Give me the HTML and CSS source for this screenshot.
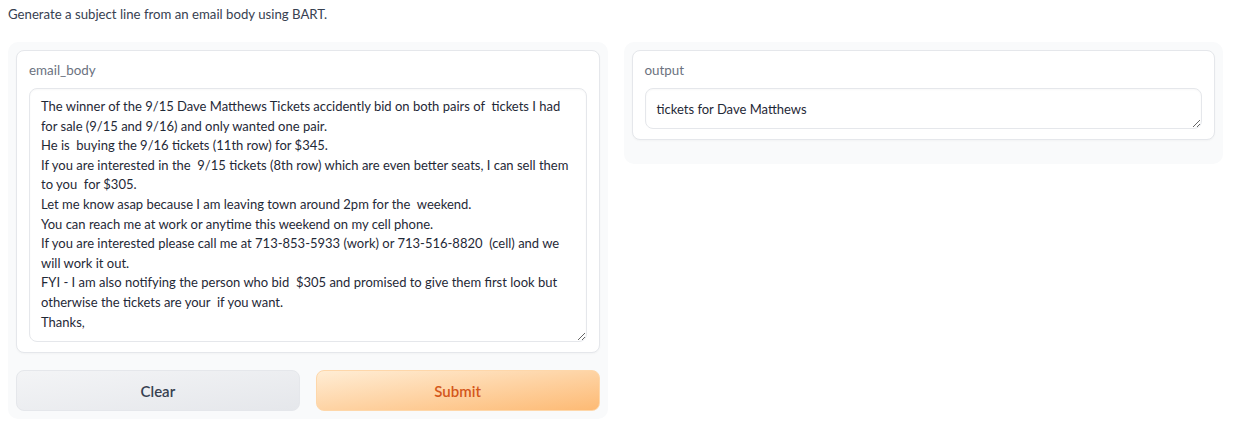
FILE: index.html
```html
<!DOCTYPE html>
<html>
<head>
<meta charset="utf-8">
<link rel="stylesheet" href="styles.css">
</head>
<body>
<p class="desc">Generate a subject line from an email body using BART.</p>
<div class="row">
  <div class="col">
    <div class="panel">
      <label class="block">
        <span class="label">email_body</span>
        <textarea class="ta ta-in" wrap="off">The winner of the 9/15 Dave Matthews Tickets accidently bid on both pairs of  tickets I had
for sale (9/15 and 9/16) and only wanted one pair.
He is  buying the 9/16 tickets (11th row) for $345.
If you are interested in the  9/15 tickets (8th row) which are even better seats, I can sell them
to you  for $305.
Let me know asap because I am leaving town around 2pm for the  weekend.
You can reach me at work or anytime this weekend on my cell phone.
If you are interested please call me at 713-853-5933 (work) or 713-516-8820  (cell) and we
will work it out.
FYI - I am also notifying the person who bid  $305 and promised to give them first look but
otherwise the tickets are your  if you want.
Thanks,</textarea>
      </label>
      <div class="buttons">
        <button class="btn btn-clear">Clear</button>
        <button class="btn btn-submit">Submit</button>
      </div>
    </div>
  </div>
  <div class="col">
    <div class="panel panel-out">
      <label class="block">
        <span class="label">output</span>
        <textarea class="ta ta-out" wrap="off">tickets for Dave Matthews</textarea>
      </label>
    </div>
  </div>
</div>
</body>
</html>
```

FILE: styles.css
```css
html, body {
  margin: 0;
  background: #ffffff;
}
body {
  padding: 0 22px 0 8px;
  font-family: "Lato", "Open Sans", sans-serif;
  color: #374151;
  font-size: 14px;
}
.desc {
  margin: 0;
  padding-top: 4px;
  height: 38px;
  line-height: 20px;
  font-size: 13.2px;
  color: #374151;
}
.row {
  display: flex;
  gap: 16px;
  align-items: flex-start;
}
.col {
  flex: 1 1 0;
  min-width: 0;
}
.panel {
  background: #f9fafb;
  border-radius: 10px;
  padding: 8px;
  display: flex;
  flex-direction: column;
  gap: 17px;
}
.panel-out {
  padding-bottom: 24px;
}
.block {
  display: flex;
  flex-direction: column;
  gap: 8px;
  background: #ffffff;
  border: 1px solid #e5e7eb;
  border-radius: 8px;
  padding: 9px 12px 10px;
  box-shadow: 0 1px 2px rgba(0,0,0,0.03);
}
.label {
  font-size: 13.4px;
  line-height: 20px;
  color: #6b7280;
}
.ta {
  display: block;
  box-sizing: border-box;
  width: 100%;
  border: 1px solid #e5e7eb;
  border-radius: 8px;
  font-family: inherit;
  font-size: 13px;
  line-height: 19.6px;
  color: #1f2937;
  padding: 8px 11px 6px;
  resize: vertical;
  overflow: hidden;
  white-space: pre;
  outline: none;
  box-shadow: inset 0 1px 2px rgba(0,0,0,0.03);
}
.ta-in {
  height: 254px;
}
.ta-out {
  height: 41px;
  padding-top: 11px;
}
.buttons {
  display: flex;
  gap: 16px;
}
.btn {
  flex: 1 1 0;
  height: 41px;
  border-radius: 8px;
  font-family: inherit;
  font-size: 15px;
  font-weight: 600;
  cursor: pointer;
}
.btn-clear {
  border: 1px solid #e5e7eb;
  background: linear-gradient(to bottom right, #f3f4f6, #e5e7eb);
  color: #374151;
}
.btn-submit {
  border: 1px solid #fed7aa;
  background: linear-gradient(to bottom right, #ffedd5, #fdba74);
  color: #d4571b;
}
```
